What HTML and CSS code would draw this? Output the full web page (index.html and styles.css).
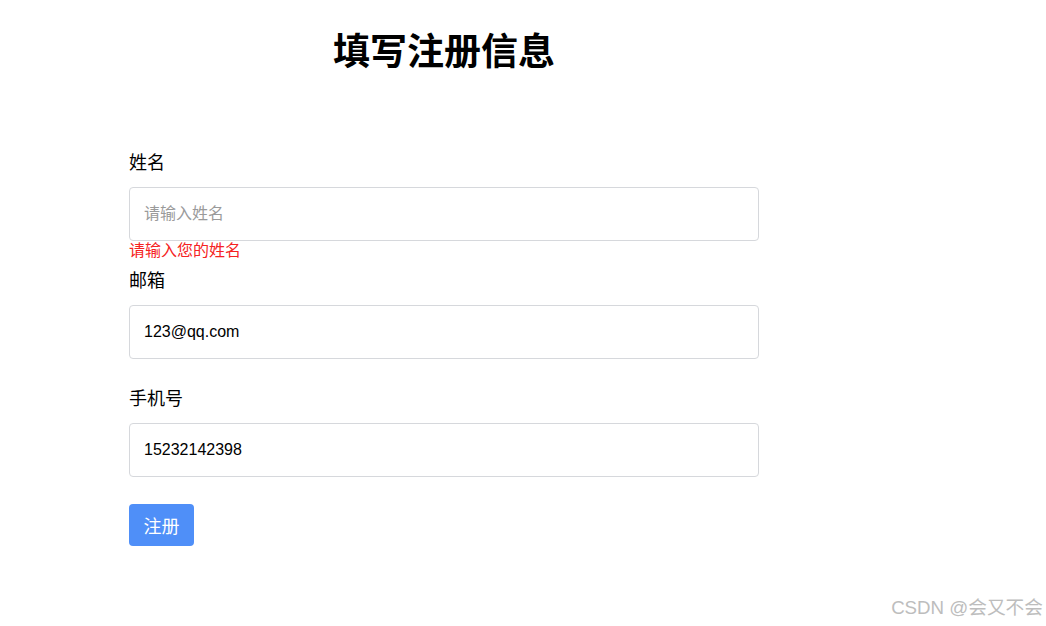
FILE: index.html
```html
<!DOCTYPE html>
<html lang="zh">
<head>
<meta charset="utf-8">
<title>填写注册信息</title>
<link rel="stylesheet" href="styles.css">
</head>
<body>
<div class="page">
  <h1 class="title">填写注册信息</h1>
  <form class="form">
    <div class="item">
      <label class="label">姓名</label>
      <div class="control">
        <input class="input" type="text" placeholder="请输入姓名">
        <div class="error">请输入您的姓名</div>
      </div>
    </div>
    <div class="item">
      <label class="label">邮箱</label>
      <div class="control">
        <input class="input" type="text" value="123@qq.com">
      </div>
    </div>
    <div class="item">
      <label class="label">手机号</label>
      <div class="control">
        <input class="input" type="text" value="15232142398">
      </div>
    </div>
    <div class="actions">
      <button class="btn" type="button">注册</button>
    </div>
  </form>
</div>
<div class="watermark">CSDN @会又不会</div>
</body>
</html>
```
FILE: styles.css
```css
* { box-sizing: border-box; }
html, body { margin: 0; padding: 0; background: #fff; }
body {
  font-family: "Liberation Sans", "Noto Sans CJK SC", sans-serif;
  color: #000;
  width: 1046px;
  height: 626px;
  position: relative;
  overflow: hidden;
}
.page {
  width: 630px;
  margin-left: 129px;
  padding-top: 31px;
}
.title {
  margin: 0;
  text-align: center;
  font-size: 37px;
  line-height: 44px;
  font-weight: bold;
}
.form {
  margin-top: 76px;
  display: flex;
  flex-direction: column;
  gap: 28px;
}
.item { display: flex; flex-direction: column; gap: 12px; }
.label {
  font-size: 18px;
  line-height: 24px;
}
.control { position: relative; }
.input {
  display: block;
  width: 100%;
  height: 54px;
  border: 1px solid #d6d8dc;
  border-radius: 4px;
  padding: 0 14px;
  font-family: "Liberation Sans", "Noto Sans CJK SC", sans-serif;
  font-size: 16px;
  color: #000;
  outline: none;
}
.input::placeholder { color: #9a9a9a; font-size: 16px; }
.error {
  position: absolute;
  left: 0;
  top: 100%;
  font-size: 16px;
  line-height: 20px;
  color: #f52222;
}
.actions { margin-top: -1px; }
.btn {
  height: 42px;
  padding: 0 14.5px;
  border: none;
  border-radius: 4px;
  background: #4f8ff8;
  color: #fff;
  font-family: "Liberation Sans", "Noto Sans CJK SC", sans-serif;
  font-size: 18px;
  cursor: pointer;
}
.watermark {
  position: absolute;
  right: 3px;
  bottom: 6px;
  font-size: 18.7px;
  line-height: 24px;
  color: #bdbdbd;
}
```
